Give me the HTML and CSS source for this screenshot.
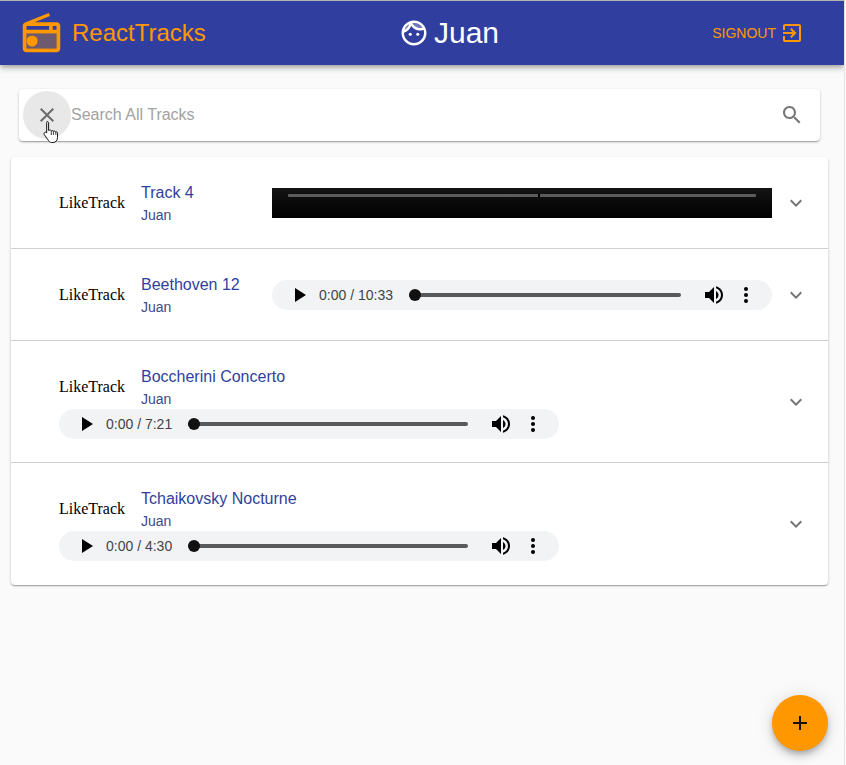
FILE: index.html
```html
<!DOCTYPE html>
<html>
<head>
   <meta charset="utf-8">
   <title>ReactTracks</title>
   <link rel="stylesheet" href="styles.css">
</head>
<body>

<div class="app">

   <header class="appbar">
      <div class="brand">
         <svg class="brand-icon" viewBox="0 0 24 24">
            <path opacity=".3" d="M4 20h16v-8H4v8zm3-7c1.66 0 3 1.34 3 3s-1.34 3-3 3-3-1.34-3-3 1.34-3 3-3z"/>
            <path d="M2 8v12c0 1.1.9 2 2 2h16c1.11 0 2-.9 2-2V8c0-1.11-.89-2-2-2H8.3l8.26-3.34L15.88 1 3.24 6.15C2.51 6.43 2 7.17 2 8zm18 12H4v-8h16v8zm0-10h-2V8h-2v2H4V8h16v2z"/>
            <circle cx="7" cy="16" r="3"/>
         </svg>
         <span class="brand-name">ReactTracks</span>
      </div>
      <div class="user">
         <svg class="user-icon" viewBox="0 0 24 24">
            <path opacity=".3" d="M17.5 8c.46 0 .91-.05 1.34-.12C17.44 5.56 14.9 4 12 4c-.46 0-.91.05-1.34.12C12.06 6.44 14.6 8 17.5 8zM8.08 5.03C6.37 6 5.05 7.58 4.42 9.47c1.71-.97 3.03-2.55 3.66-4.44z"/>
            <path d="M12 2C6.48 2 2 6.48 2 12s4.48 10 10 10 10-4.48 10-10S17.52 2 12 2zm0 2c2.9 0 5.44 1.56 6.84 3.88-.43.07-.88.12-1.34.12-2.9 0-5.44-1.56-6.84-3.88.43-.07.88-.12 1.34-.12zM8.08 5.03C7.45 6.92 6.13 8.5 4.42 9.47 5.05 7.58 6.37 6 8.08 5.03zM12 20c-4.41 0-8-3.59-8-8 0-.05.01-.1.01-.15 2.6-.98 4.68-2.99 5.74-5.55C11.25 8.1 13.23 10 17.5 10c.8 0 1.56-.12 2.29-.34.13.76.21 1.53.21 2.34 0 4.41-3.59 8-8 8z"/>
            <circle cx="9" cy="13" r="1.25"/>
            <circle cx="15" cy="13" r="1.25"/>
         </svg>
         <span class="user-name">Juan</span>
      </div>
      <div class="signout">
         <span class="signout-text">SIGNOUT</span>
         <svg class="signout-icon" viewBox="0 0 24 24">
            <path d="M10.09 15.59L11.5 17l5-5-5-5-1.41 1.41L12.67 11H3v2h9.67l-2.58 2.59zM19 3H5c-1.11 0-2 .9-2 2v4h2V5h14v14H5v-4H3v4c0 1.1.89 2 2 2h14c1.1 0 2-.9 2-2V5c0-1.1-.9-2-2-2z"/>
         </svg>
      </div>
   </header>

   <div class="search">
      <div class="clear-btn">
         <svg class="icon" viewBox="0 0 24 24">
            <path d="M19 6.41L17.59 5 12 10.59 6.41 5 5 6.41 10.59 12 5 17.59 6.41 19 12 13.41 17.59 19 19 17.59 13.41 12z"/>
         </svg>
      </div>
      <span class="search-text">Search All Tracks</span>
      <svg class="icon search-icon" viewBox="0 0 24 24">
         <path d="M15.5 14h-.79l-.28-.27C15.41 12.59 16 11.11 16 9.5 16 5.91 13.09 3 9.5 3S3 5.91 3 9.5 5.91 16 9.5 16c1.61 0 3.09-.59 4.23-1.57l.27.28v.79l5 4.99L20.49 19l-4.99-5zm-6 0C7.01 14 5 11.99 5 9.5S7.01 5 9.5 5 14 7.01 14 9.5 11.99 14 9.5 14z"/>
      </svg>
   </div>

   <div class="tracks">

      <div class="track">
         <div class="track-body">
            <span class="like">LikeTrack</span>
            <div class="info">
               <div class="info-title">Track 4</div>
               <div class="info-by">Juan</div>
            </div>
            <div class="player-dark">
               <div class="player-dark-line"></div>
            </div>
         </div>
         <svg class="icon chevron" viewBox="0 0 24 24"><path d="M16.59 8.59L12 13.17 7.41 8.59 6 10l6 6 6-6z"/></svg>
      </div>

      <div class="track">
         <div class="track-body">
            <span class="like">LikeTrack</span>
            <div class="info">
               <div class="info-title">Beethoven 12</div>
               <div class="info-by">Juan</div>
            </div>
            <div class="player">
               <svg class="player-play" viewBox="0 0 24 24"><path d="M8 5v14l11-7z"/></svg>
               <span class="player-time">0:00 / 10:33</span>
               <div class="player-bar"></div>
               <svg class="player-vol" viewBox="0 0 24 24"><path d="M3 9v6h4l5 5V4L7 9H3zm13.5 3c0-1.77-1.02-3.29-2.5-4.03v8.05c1.48-.73 2.5-2.25 2.5-4.02zM14 3.23v2.06c2.89.86 5 3.54 5 6.71s-2.11 5.85-5 6.71v2.06c4.01-.91 7-4.49 7-8.77s-2.99-7.86-7-8.77z"/></svg>
               <svg class="player-more" viewBox="0 0 24 24"><circle cx="12" cy="6" r="2"/><circle cx="12" cy="12" r="2"/><circle cx="12" cy="18" r="2"/></svg>
            </div>
         </div>
         <svg class="icon chevron" viewBox="0 0 24 24"><path d="M16.59 8.59L12 13.17 7.41 8.59 6 10l6 6 6-6z"/></svg>
      </div>

      <div class="track">
         <div class="track-body">
            <span class="like">LikeTrack</span>
            <div class="info">
               <div class="info-title">Boccherini Concerto</div>
               <div class="info-by">Juan</div>
            </div>
            <div class="player">
               <svg class="player-play" viewBox="0 0 24 24"><path d="M8 5v14l11-7z"/></svg>
               <span class="player-time">0:00 / 7:21</span>
               <div class="player-bar"></div>
               <svg class="player-vol" viewBox="0 0 24 24"><path d="M3 9v6h4l5 5V4L7 9H3zm13.5 3c0-1.77-1.02-3.29-2.5-4.03v8.05c1.48-.73 2.5-2.25 2.5-4.02zM14 3.23v2.06c2.89.86 5 3.54 5 6.71s-2.11 5.85-5 6.71v2.06c4.01-.91 7-4.49 7-8.77s-2.99-7.86-7-8.77z"/></svg>
               <svg class="player-more" viewBox="0 0 24 24"><circle cx="12" cy="6" r="2"/><circle cx="12" cy="12" r="2"/><circle cx="12" cy="18" r="2"/></svg>
            </div>
         </div>
         <svg class="icon chevron" viewBox="0 0 24 24"><path d="M16.59 8.59L12 13.17 7.41 8.59 6 10l6 6 6-6z"/></svg>
      </div>

      <div class="track">
         <div class="track-body">
            <span class="like">LikeTrack</span>
            <div class="info">
               <div class="info-title">Tchaikovsky Nocturne</div>
               <div class="info-by">Juan</div>
            </div>
            <div class="player">
               <svg class="player-play" viewBox="0 0 24 24"><path d="M8 5v14l11-7z"/></svg>
               <span class="player-time">0:00 / 4:30</span>
               <div class="player-bar"></div>
               <svg class="player-vol" viewBox="0 0 24 24"><path d="M3 9v6h4l5 5V4L7 9H3zm13.5 3c0-1.77-1.02-3.29-2.5-4.03v8.05c1.48-.73 2.5-2.25 2.5-4.02zM14 3.23v2.06c2.89.86 5 3.54 5 6.71s-2.11 5.85-5 6.71v2.06c4.01-.91 7-4.49 7-8.77s-2.99-7.86-7-8.77z"/></svg>
               <svg class="player-more" viewBox="0 0 24 24"><circle cx="12" cy="6" r="2"/><circle cx="12" cy="12" r="2"/><circle cx="12" cy="18" r="2"/></svg>
            </div>
         </div>
         <svg class="icon chevron" viewBox="0 0 24 24"><path d="M16.59 8.59L12 13.17 7.41 8.59 6 10l6 6 6-6z"/></svg>
      </div>

   </div>

   <div class="fab">
      <svg class="fab-icon" viewBox="0 0 24 24"><path d="M19 13h-6v6h-2v-6H5v-2h6V5h2v6h6v2z"/></svg>
   </div>

   <!-- mouse pointer caught in the screenshot -->
   <svg class="pointer" viewBox="0 0 18 24">
      <path d="M4 1.5c1 0 1.6.6 1.6 1.6v7.4l1-.3c.8-.2 1.4 0 1.7.6.8-.4 1.6-.3 2 .4.8-.4 1.7-.2 2.1.5.9-.3 2.1.2 2.1 1.5v4.3c0 2.6-1.6 5-4.4 5H8.600c-1.400 0-2.300-.7-3-1.800L1.300 14.700c-.6-1-.3-1.900.4-2.300.7-.4 1.400-.2 2 .5V3.100c0-1 .3-1.600.3-1.600z" fill="#fff" stroke="#111" stroke-width="1"/>
      <path d="M8.300 11v4M10.400 11.300v3.700M12.800 12v3" fill="none" stroke="#111" stroke-width=".8"/>
   </svg>

</div>

</body>
</html>
```

FILE: styles.css
```css
html, body {
   margin: 0;
   background-color: #fafafa;
}
body {
   font-family: "Liberation Sans", Arial, sans-serif;
}
.app {
   width: 844px;
   height: 764px;
   border-top: 1px solid #b5b5b5;
   border-right: 1px solid #e4e4e4;
   overflow: hidden;
}
svg {
   display: block;
   flex: none;
}

/* app bar */
.appbar {
   height: 64px;
   background-color: #303f9f;
   display: flex;
   align-items: center;
   box-shadow: 0 2px 4px -1px rgba(0,0,0,.2), 0 4px 5px 0 rgba(0,0,0,.14), 0 1px 10px 0 rgba(0,0,0,.12);
   position: relative;
}
.brand {
   display: flex;
   align-items: center;
   width: 380px;
   padding-left: 19px;
   box-sizing: border-box;
   color: #ff9800;
}
.brand-icon {
   width: 45px;
   height: 45px;
   fill: #ff9800;
   margin-right: 8px;
}
.brand-name {
   font-size: 24px;
}
.user {
   display: flex;
   align-items: center;
   color: #fff;
}
.user-icon {
   width: 30px;
   height: 30px;
   fill: #fff;
   margin-left: 19px;
   margin-right: 5px;
}
.user-name {
   font-size: 30px;
}
.signout {
   display: flex;
   align-items: center;
   margin-left: auto;
   margin-right: 40px;
   color: #ff9800;
}
.signout-text {
   font-size: 14px;
   margin-right: 4px;
}
.signout-icon {
   width: 24px;
   height: 24px;
   fill: #ff9800;
}

/* search */
.search {
   width: 801px;
   height: 52px;
   margin: 24px 0 0 19px;
   background-color: #fff;
   border-radius: 4px;
   box-shadow: 0 1px 3px 0 rgba(0,0,0,.2), 0 1px 1px 0 rgba(0,0,0,.14), 0 2px 1px -1px rgba(0,0,0,.12);
   display: flex;
   align-items: center;
   padding: 0 16px 0 4px;
   box-sizing: border-box;
}
.icon {
   width: 24px;
   height: 24px;
   fill: rgba(0,0,0,.54);
}
.clear-btn {
   width: 48px;
   height: 48px;
   border-radius: 50%;
   background-color: #e8e8e8;
   display: flex;
   align-items: center;
   justify-content: center;
}
.search-text {
   font-size: 16px;
   color: #a2a2a2;
}
.search-icon {
   margin-left: auto;
}

/* tracks */
.tracks {
   width: 817px;
   margin: 16px 0 0 11px;
}
.track {
   display: flex;
   align-items: flex-start;
   padding: 24px 20px 24px 48px;
   background-color: #fff;
   box-shadow: 0 1px 3px 0 rgba(0,0,0,.2), 0 1px 1px 0 rgba(0,0,0,.14), 0 2px 1px -1px rgba(0,0,0,.12);
   position: relative;
}
.track:not(:last-child) {
   padding-bottom: 23px;
   border-bottom: 1px solid #d6d6d6;
}
.track:first-child {
   border-radius: 4px 4px 0 0;
}
.track:last-child {
   border-radius: 0 0 4px 4px;
}
.track-body {
   width: 713px;
   display: flex;
   flex-wrap: wrap;
   align-items: center;
}
.like {
   width: 82px;
   font-family: "Liberation Serif", "Times New Roman", serif;
   font-size: 16px;
   color: #000;
}
.info {
   min-width: 115px;
   padding-right: 16px;
}
.info-title {
   font-size: 16px;
   line-height: 24px;
   color: #303f9f;
}
.info-by {
   font-size: 14px;
   line-height: 20px;
   color: #3b4a8c;
}
.chevron {
   margin: 10px 0 0 0;
   margin-left: auto;
}
.track:nth-child(n+3) .chevron {
   margin-top: 25px;
}
.track:nth-child(2) .chevron {
   margin-top: 10px;
}

/* audio players */
.player {
   width: 500px;
   height: 30px;
   background-color: #f1f3f4;
   border-radius: 15px;
   display: flex;
   align-items: center;
   padding: 0 14px 0 15px;
   box-sizing: border-box;
}
.player-play {
   width: 24px;
   height: 24px;
   fill: #000;
}
.player-time {
   font-size: 14px;
   color: #444;
   margin-left: 8px;
   margin-right: 16px;
   white-space: nowrap;
}
.player-bar {
   flex: 1;
   height: 4px;
   background-color: #595959;
   border-radius: 2px;
   position: relative;
   margin-right: 21px;
}
.player-bar::before {
   content: "";
   position: absolute;
   left: 0;
   top: -4px;
   width: 12px;
   height: 12px;
   border-radius: 50%;
   background-color: #111;
}
.player-vol {
   width: 24px;
   height: 24px;
   fill: #000;
   margin-right: 8px;
}
.player-more {
   width: 24px;
   height: 24px;
   fill: #000;
}
.player-dark {
   width: 500px;
   height: 30px;
   background: linear-gradient(#141414, #000);
   padding: 6px 16px 0;
   box-sizing: border-box;
}
.player-dark-line {
   height: 3px;
   background: linear-gradient(90deg, #5c5c5c 53.4%, #000 53.4%, #000 53.8%, #5c5c5c 53.8%);
   border-radius: 1px;
}

/* add button */
.fab {
   position: fixed;
   left: 772px;
   top: 695px;
   width: 56px;
   height: 56px;
   border-radius: 50%;
   background-color: #ff9800;
   display: flex;
   align-items: center;
   justify-content: center;
   box-shadow: 0 3px 5px -1px rgba(0,0,0,.2), 0 6px 10px 0 rgba(0,0,0,.14), 0 1px 18px 0 rgba(0,0,0,.12);
}
.fab-icon {
   width: 24px;
   height: 24px;
   fill: #1a1205;
}

.pointer {
   position: fixed;
   left: 43px;
   top: 120px;
   width: 18px;
   height: 24px;
}
```
